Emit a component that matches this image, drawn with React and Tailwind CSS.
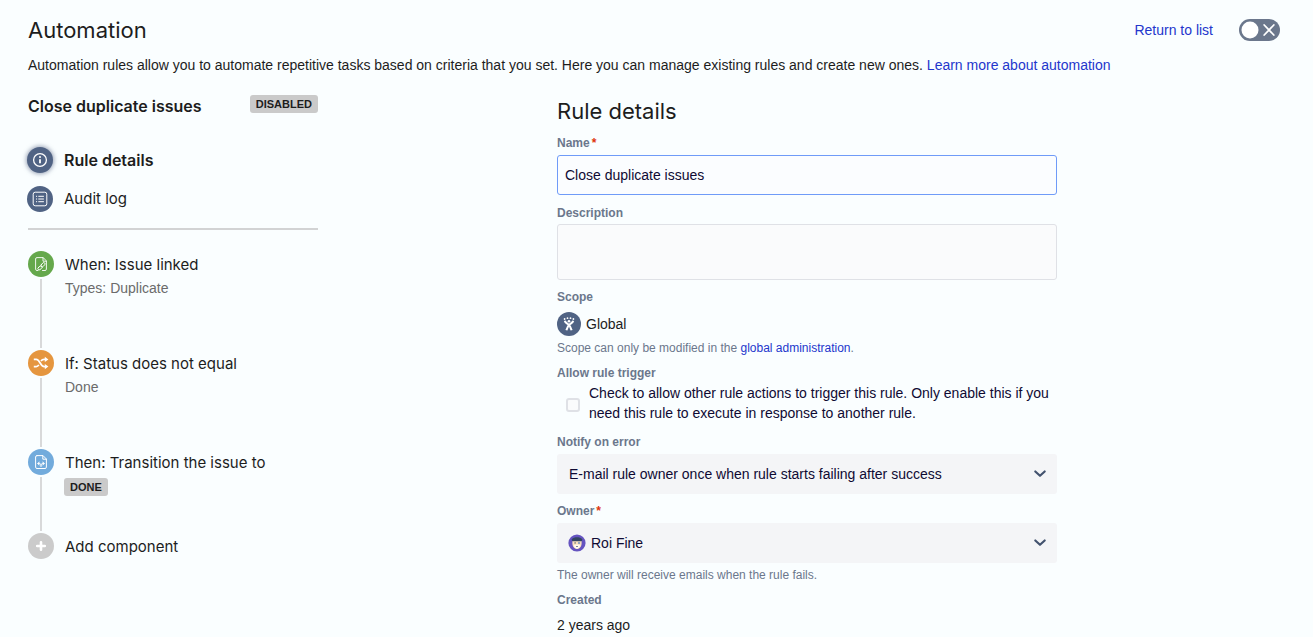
import React, { useState } from "react";

const heading = "font-['Inter',sans-serif]";
const title = "font-['Inter',sans-serif] text-[22px] leading-7";
const labelText = "block text-xs leading-4 font-bold text-[#6b778c]";

function InfoIcon() {
  return (
    <svg viewBox="0 0 16 16" className="size-4" fill="none" stroke="white" strokeWidth="1.3" aria-hidden="true">
      <circle cx="8" cy="8" r="6.4" />
      <path d="M8 7.2v4" strokeWidth="1.8" />
      <circle cx="8" cy="5" r="1" fill="white" stroke="none" />
    </svg>
  );
}

function LogIcon() {
  return (
    <svg viewBox="0 0 16 16" className="size-4" fill="none" stroke="white" strokeWidth="1" aria-hidden="true">
      <rect x="1.2" y="1.2" width="13.6" height="13.6" rx="2" />
      <path d="M6.3 5.3h5.6M6.3 8h5.6M6.3 10.7h5.6" />
      <path d="M4 5.3h1.1M4 8h1.1M4 10.7h1.1" />
    </svg>
  );
}

function LinkedIssueIcon() {
  return (
    <svg viewBox="0 0 16 16" className="size-4" fill="none" stroke="white" strokeWidth="0.9" strokeLinejoin="round" strokeLinecap="round" aria-hidden="true">
      <path d="M5 14.5H4a1.4 1.4 0 0 1-1.4-1.4V3A1.4 1.4 0 0 1 4 1.6h6.2l3.2 3.3v8.2a1.4 1.4 0 0 1-1.4 1.4H9.5" />
      <path d="M10 1.8v3.4h3.2" />
      <rect x="7.6" y="7.4" width="4.8" height="2.6" rx="1.3" transform="rotate(-48 10 8.7)" />
      <rect x="4.6" y="10.6" width="4.8" height="2.6" rx="1.3" transform="rotate(-40 7 11.9)" />
    </svg>
  );
}

function ShuffleIcon() {
  return (
    <svg viewBox="0 0 16 16" className="size-4" fill="none" stroke="white" strokeWidth="1.7" aria-hidden="true">
      <path d="M0.8 4.4h2.4c3.9 0 4 7.2 8 7.2h1.3" />
      <path d="M0.8 11.6h2.4c1.2 0 2-.7 2.6-1.7M8 6.1c.7-1 1.6-1.7 3.2-1.7h1.3" />
      <path d="M11.8 1.7 15.4 4.4l-3.6 2.7zM11.8 8.9l3.6 2.7-3.6 2.7z" fill="white" stroke="none" />
    </svg>
  );
}

function TransitionIcon() {
  return (
    <svg viewBox="0 0 16 16" className="size-4" fill="none" stroke="white" strokeWidth="1" strokeLinejoin="round" strokeLinecap="round" aria-hidden="true">
      <path d="M4 1.6h6l3.4 3.4v8.1a1.4 1.4 0 0 1-1.4 1.4H4a1.4 1.4 0 0 1-1.4-1.4V3A1.4 1.4 0 0 1 4 1.6z" />
      <path d="M9.8 1.8v3.4h3.4" />
      <path d="M8 12.6v-1.4c0-1-.6-1.7-1.6-1.7H5M8 11.2c0-1 .6-1.7 1.6-1.7H11" />
      <path d="M6 8 4.5 9.500 6 11zM10 8l1.500 1.500L10 11z" fill="white" strokeWidth="0.5" />
    </svg>
  );
}

function PlusIcon() {
  return (
    <svg viewBox="0 0 16 16" className="size-4" stroke="white" strokeWidth="2.6" strokeLinecap="round" aria-hidden="true">
      <path d="M8 4.2v7.6M4.2 8h7.6" />
    </svg>
  );
}

function GlobalIcon() {
  return (
    <svg viewBox="0 0 16 16" className="size-4" fill="none" stroke="white" aria-hidden="true">
      <circle cx="3.600" cy="3" r="0.9" fill="white" stroke="none" />
      <circle cx="6.500" cy="2.200" r="0.9" fill="white" stroke="none" />
      <circle cx="9.500" cy="2.200" r="0.9" fill="white" stroke="none" />
      <circle cx="12.400" cy="3" r="0.9" fill="white" stroke="none" />
      <path d="M3.800 4.800c.4 2 2 2.300 3.600 3.800 1.500 1.300 2.600 2.900 3.200 5.600" strokeWidth="2" />
      <path d="M12.200 4.800c-.4 2-2 2.300-3.600 3.800-1.500 1.300-2.600 2.900-3.200 5.600" strokeWidth="2" />
      <circle cx="8" cy="5.300" r="1.300" fill="white" stroke="none" />
    </svg>
  );
}

function Avatar() {
  return (
    <svg viewBox="0 0 18 18" className="size-[18px]" aria-hidden="true">
      <circle cx="9" cy="9" r="8.6" fill="#6554c0" />
      <path d="M4.400 7h9.200v2.500c0 3-1.900 5.400-4.600 5.400s-4.600-2.400-4.600-5.400z" fill="#fbe3bd" />
      <path d="M5.800 11.300c1.600-1 4.800-1 6.400 0-.4 2.200-1.700 3.500-3.200 3.500s-2.800-1.300-3.200-3.500z" fill="#fffaf0" />
      <path d="M3.600 5.400C5 3.600 7 3.200 9 3.200s4 .4 5.400 2.200l-.8 1.800H4.400z" fill="#344563" />
      <circle cx="7.100" cy="8.900" r="0.700" fill="#344563" />
      <circle cx="11" cy="8.900" r="1.200" fill="#8fa3bf" />
      <path d="M8.100 12.500h1.800" stroke="#344563" strokeWidth="0.700" />
    </svg>
  );
}

function Chevron() {
  return (
    <svg viewBox="0 0 16 16" className="pointer-events-none absolute right-[9px] top-3 size-4" fill="none" stroke="#42526e" strokeWidth="2.2" strokeLinecap="round" strokeLinejoin="round" aria-hidden="true">
      <path d="M3.300 5.500 8 9.800l4.700-4.300" />
    </svg>
  );
}

function Badge({ children }) {
  return (
    <span className="inline-block rounded-[3px] bg-[#cacaca] px-1.5 text-[11px] leading-[18px] font-bold text-[#1d1d1d]">
      {children}
    </span>
  );
}

const steps = [
  { title: "When: Issue linked", detail: "Types: Duplicate", icon: <LinkedIssueIcon />, color: "bg-[#65a84c]", height: "h-[99px]" },
  { title: "If: Status does not equal", detail: "Done", icon: <ShuffleIcon />, color: "bg-[#e5963f]", height: "h-[99px]" },
  { title: "Then: Transition the issue to", badge: "DONE", icon: <TransitionIcon />, color: "bg-[#72abdc]", height: "h-[84px]" },
  { title: "Add component", icon: <PlusIcon />, color: "bg-[#cbcbcb]", height: "", last: true },
];

function Sidebar() {
  return (
    <aside className="w-[290px] shrink-0">
      <div className="flex items-start justify-between">
        <h2 className={`${heading} text-base leading-[22px] font-semibold`}>Close duplicate issues</h2>
        <Badge>DISABLED</Badge>
      </div>
      <nav className="-ml-px mt-[30px] flex flex-col items-start gap-[13px]">
        <button type="button" className={`${heading} flex items-center gap-[11px] text-base leading-5 font-semibold`}>
          <span className="grid size-[26px] place-items-center rounded-full bg-[#506384] shadow-[0_0_4px_1px_rgba(80,95,127,0.55)]"><InfoIcon /></span>
          Rule details
        </button>
        <button type="button" className={`${heading} flex items-center gap-[11px] text-[15px] leading-[22px]`}>
          <span className="grid size-[26px] place-items-center rounded-full bg-[#506384]"><LogIcon /></span>
          Audit log
        </button>
      </nav>
      <hr className="mt-4 border-t-2 border-[#d2d3d4]" />
      <ol className="mt-[21px]">
        {steps.map((s) => (
          <li key={s.title} className={`flex gap-[11px] ${s.height}`}>
            <div className="flex flex-col items-center gap-0.5">
              <span className={`grid size-[26px] shrink-0 place-items-center rounded-full ${s.color}`}>{s.icon}</span>
              {!s.last && <span className="mb-0.5 w-0.5 flex-1 bg-[#d8d9da]" />}
            </div>
            <div>
              <button type="button" className={`${heading} block text-[15px] leading-7`}>{s.title}</button>
              {s.detail && <p className="text-sm leading-[18px] text-[#6b6b6b]">{s.detail}</p>}
              {s.badge && <div className="-ml-px leading-[18px]"><Badge>{s.badge}</Badge></div>}
            </div>
          </li>
        ))}
      </ol>
    </aside>
  );
}

function Required() {
  return <span className="ml-0.5 text-[#de350b]">*</span>;
}

function RuleForm() {
  return (
    <form className="w-full max-w-[500px] text-sm leading-5" onSubmit={(e) => e.preventDefault()}>
      <h2 className={`${title} mt-0.5`}>Rule details</h2>
      <label htmlFor="name" className={`${labelText} mt-2.5`}>Name<Required /></label>
      <input id="name" defaultValue="Close duplicate issues" className="mt-1 h-10 w-full rounded-[3px] border border-[#6f9bf8] bg-[#fbfdff] px-[7px] text-[#0f0a33] outline-none" />
      <label htmlFor="description" className={`${labelText} mt-2.5`}>Description</label>
      <textarea id="description" className="mt-[3px] block h-14 w-full resize-none rounded-[3px] border border-[#dfe1e6] bg-[#fafbfc] px-[7px] py-2 outline-none" />
      <h3 className={`${labelText} mt-[9px]`}>Scope</h3>
      <div className="mt-[7px] flex items-center gap-[5px]">
        <span className="grid size-6 place-items-center rounded-full bg-[#506384]"><GlobalIcon /></span>
        <span>Global</span>
      </div>
      <p className="mt-1 text-xs leading-4 text-[#6b778c]">
        Scope can only be modified in the <a href="#admin" className="text-[#2336cc]">global administration</a>.
      </p>
      <h3 className={`${labelText} mt-[9px]`}>Allow rule trigger</h3>
      <label className="mt-0.5 flex items-center gap-[9px] pl-[9px] text-[#0f0a33]">
        <input type="checkbox" className="mt-1 size-3.5 shrink-0 appearance-none rounded-[3px] border-2 border-[#dfe1e6] bg-[#fafbfc] checked:bg-[#0052cc]" />
        <span>Check to allow other rule actions to trigger this rule. Only enable this if you need this rule to execute in response to another rule.</span>
      </label>
      <label htmlFor="notify" className={`${labelText} mt-[11px]`}>Notify on error</label>
      <div className="relative mt-1">
        <select id="notify" className="block h-10 w-full appearance-none rounded-[3px] bg-[#f4f5f7] pr-8 pl-3 text-[#0f0a33] outline-none">
          <option>E-mail rule owner once when rule starts failing after success</option>
          <option>E-mail rule owner every time the rule fails</option>
        </select>
        <Chevron />
      </div>
      <label htmlFor="owner" className={`${labelText} mt-[9px]`}>Owner<Required /></label>
      <div className="relative mt-1">
        <select id="owner" className="block h-10 w-full appearance-none rounded-[3px] bg-[#f4f5f7] pr-8 pl-[34px] text-[#0f0a33] outline-none">
          <option>Roi Fine</option>
        </select>
        <span className="pointer-events-none absolute top-[11px] left-[11px]"><Avatar /></span>
        <Chevron />
      </div>
      <p className="mt-1 text-xs leading-4 text-[#6b778c]">The owner will receive emails when the rule fails.</p>
      <h3 className={`${labelText} mt-[9px]`}>Created</h3>
      <p className="mt-[7px]">2 years ago</p>
    </form>
  );
}

export default function App() {
  const [enabled, setEnabled] = useState(false);
  return (
    <div className="min-h-screen bg-[#fafeff] px-7 pt-4 font-['Liberation_Sans',Arial,sans-serif] text-sm text-[#1d1d1d]">
      <header>
        <div className="flex items-center justify-between">
          <h1 className={title}>Automation</h1>
          <div className="mr-[5px] flex items-center gap-[26px]">
            <a href="#rules" className="text-[#2336cc]">Return to list</a>
            <label className="relative block">
              <input
                type="checkbox"
                role="switch"
                aria-label="Rule enabled"
                checked={enabled}
                onChange={(e) => setEnabled(e.target.checked)}
                className="block h-[22px] w-[41px] appearance-none rounded-full bg-[#6b778c] checked:bg-[#36b37e]"
              />
              <svg viewBox="0 0 41 22" className="pointer-events-none absolute inset-0 h-full w-full" aria-hidden="true">
                <circle cx={enabled ? 30 : 11} cy="11" r="8.5" fill="white" />
                {!enabled && <path d="M25.2 6l9.600 10M34.800 6l-9.600 10" stroke="white" strokeWidth="1.8" strokeLinecap="round" />}
              </svg>
            </label>
          </div>
        </div>
        <p className="mt-[11px] leading-5">
          Automation rules allow you to automate repetitive tasks based on criteria that you set. Here you can manage existing rules and create new ones.{" "}
          <a href="#learn" className="text-[#2336cc]">Learn more about automation</a>
        </p>
      </header>
      <div className="mt-5 flex">
        <Sidebar />
        <main className="flex flex-1 justify-center pl-[11px]">
          <RuleForm />
        </main>
      </div>
    </div>
  );
}
